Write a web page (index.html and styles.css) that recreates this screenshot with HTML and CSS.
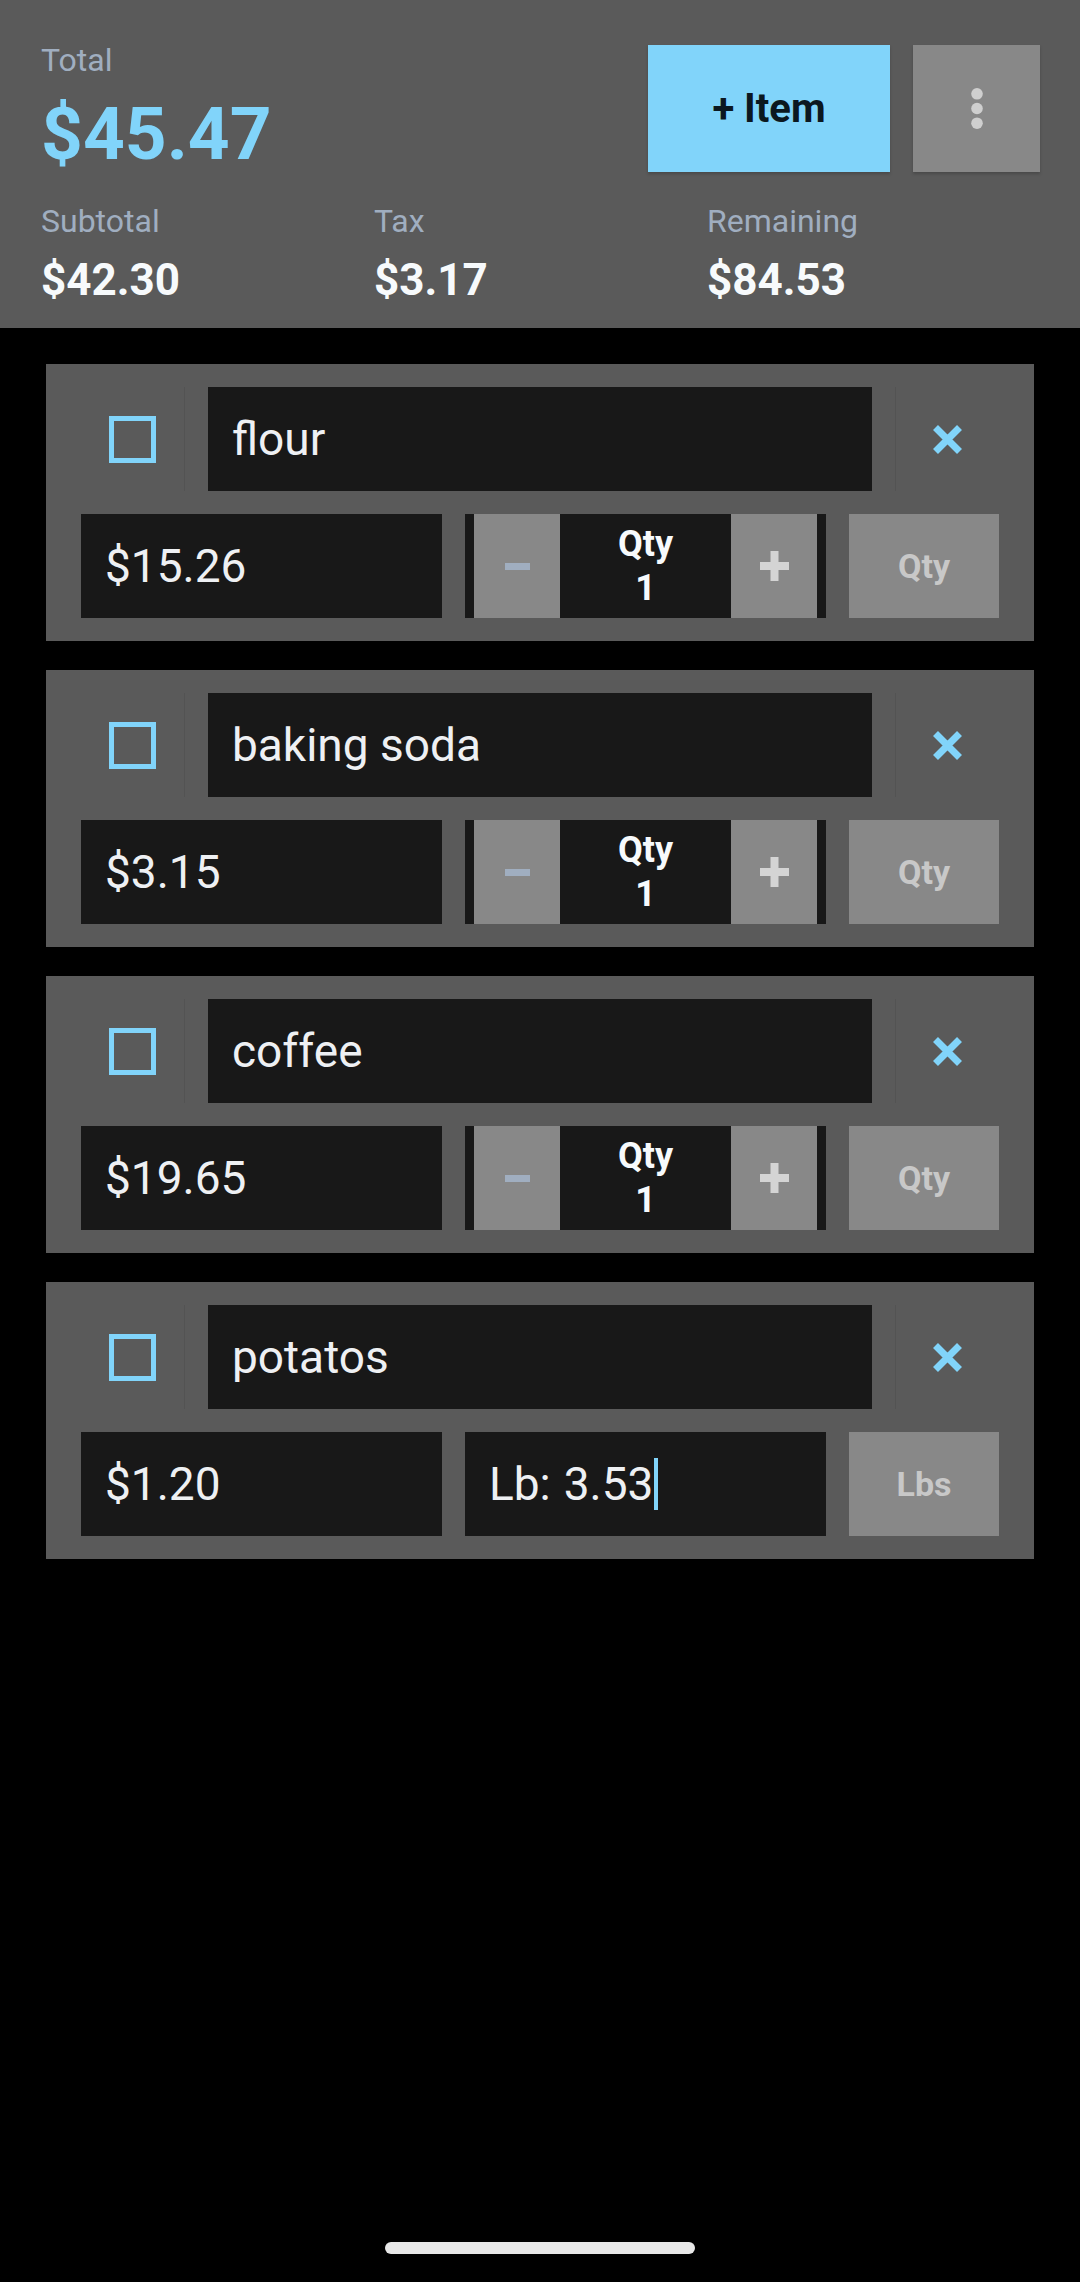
FILE: index.html
```html
<!DOCTYPE html>
<html>
  <head>
    <title>Grocery Total</title>
    <meta charset="UTF-8" />
    <link rel="stylesheet" href="styles.css">
  </head>
  <body>
    <div class="header">
      <div class="top">
        <div class="total">
          <div class="label">Total</div>
          <div class="amount">$45.47</div>
        </div>
        <div class="actions">
          <div class="add-btn">+ Item</div>
          <div class="menu-btn">
            <svg width="12" height="41" viewBox="0 0 12 41"><circle cx="6" cy="5.8" r="5.8" fill="#cfcfcf"/><circle cx="6" cy="20.5" r="5.8" fill="#cfcfcf"/><circle cx="6" cy="35.2" r="5.8" fill="#cfcfcf"/></svg>
          </div>
        </div>
      </div>
      <div class="summary">
        <div><div class="label">Subtotal</div><div class="amount">$42.30</div></div>
        <div><div class="label">Tax</div><div class="amount">$3.17</div></div>
        <div><div class="label">Remaining</div><div class="amount">$84.53</div></div>
      </div>
    </div>

    <div class="list">
      <div class="card">
        <div class="row-top">
          <div class="check-cell"><div class="checkbox"></div></div>
          <div class="field">flour</div>
          <div class="remove-cell"><svg width="29" height="29" viewBox="0 0 29 29"><path d="M2.5 2.5L26.5 26.5M26.5 2.5L2.5 26.5" stroke="#81d4fa" stroke-width="7"/></svg></div>
        </div>
        <div class="row-bottom">
          <div class="field">$15.26</div>
          <div class="stepper">
            <div class="step"><div class="minus"></div></div>
            <div class="qty">Qty<br />1</div>
            <div class="step"><svg width="29" height="30" viewBox="0 0 29 30"><path d="M14.5 0V30M0 15H29" stroke="#d4d4d4" stroke-width="8"/></svg></div>
          </div>
          <div class="unit-btn">Qty</div>
        </div>
      </div>

      <div class="card">
        <div class="row-top">
          <div class="check-cell"><div class="checkbox"></div></div>
          <div class="field">baking soda</div>
          <div class="remove-cell"><svg width="29" height="29" viewBox="0 0 29 29"><path d="M2.5 2.5L26.5 26.5M26.5 2.5L2.5 26.5" stroke="#81d4fa" stroke-width="7"/></svg></div>
        </div>
        <div class="row-bottom">
          <div class="field">$3.15</div>
          <div class="stepper">
            <div class="step"><div class="minus"></div></div>
            <div class="qty">Qty<br />1</div>
            <div class="step"><svg width="29" height="30" viewBox="0 0 29 30"><path d="M14.5 0V30M0 15H29" stroke="#d4d4d4" stroke-width="8"/></svg></div>
          </div>
          <div class="unit-btn">Qty</div>
        </div>
      </div>

      <div class="card">
        <div class="row-top">
          <div class="check-cell"><div class="checkbox"></div></div>
          <div class="field">coffee</div>
          <div class="remove-cell"><svg width="29" height="29" viewBox="0 0 29 29"><path d="M2.5 2.5L26.5 26.5M26.5 2.5L2.5 26.5" stroke="#81d4fa" stroke-width="7"/></svg></div>
        </div>
        <div class="row-bottom">
          <div class="field">$19.65</div>
          <div class="stepper">
            <div class="step"><div class="minus"></div></div>
            <div class="qty">Qty<br />1</div>
            <div class="step"><svg width="29" height="30" viewBox="0 0 29 30"><path d="M14.5 0V30M0 15H29" stroke="#d4d4d4" stroke-width="8"/></svg></div>
          </div>
          <div class="unit-btn">Qty</div>
        </div>
      </div>

      <div class="card">
        <div class="row-top">
          <div class="check-cell"><div class="checkbox"></div></div>
          <div class="field">potatos</div>
          <div class="remove-cell"><svg width="29" height="29" viewBox="0 0 29 29"><path d="M2.5 2.5L26.5 26.5M26.5 2.5L2.5 26.5" stroke="#81d4fa" stroke-width="7"/></svg></div>
        </div>
        <div class="row-bottom">
          <div class="field">$1.20</div>
          <div class="field"><span class="unit-label">Lb:</span><span>3.53</span><span class="cursor"></span></div>
          <div class="unit-btn">Lbs</div>
        </div>
      </div>
    </div>

    <div class="home-bar"></div>
  </body>
</html>
```

FILE: styles.css
```css
body {
  margin: 0;
  min-height: 2282px;
  background: #000;
  font-family: Roboto, "Liberation Sans", sans-serif;
  display: flex;
  flex-direction: column;
}
.header {
  background: #5a5a5a;
  padding: 41px 40px 22px 41px;
}
.top {
  display: flex;
  align-items: flex-start;
}
.total {
  flex: 1;
}
.label {
  font-size: 32px;
  line-height: 38px;
  color: #a0aec0;
}
.total .amount {
  margin-top: 12px;
  font-size: 73px;
  line-height: 86px;
  font-weight: bold;
  color: #81d4fa;
}
.actions {
  display: flex;
  gap: 23px;
  margin-top: 4px;
}
.add-btn,
.menu-btn {
  height: 127px;
  display: flex;
  align-items: center;
  justify-content: center;
  box-shadow: 0 2px 3px rgba(0, 0, 0, 0.2);
}
.add-btn {
  width: 242px;
  background: #81d4fa;
  color: #0b1820;
  font-size: 40px;
  font-weight: bold;
}
.menu-btn {
  width: 127px;
  background: #888;
}
.summary {
  display: grid;
  grid-template-columns: repeat(3, 333px);
  margin-top: 25px;
}
.summary .amount {
  margin-top: 14px;
  font-size: 44px;
  line-height: 52px;
  font-weight: bold;
  color: #f7fafc;
}
.list {
  display: flex;
  flex-direction: column;
  gap: 29px;
  padding: 36px 46px;
}
.card {
  background: #5a5a5a;
  padding: 23px 35px;
  display: flex;
  flex-direction: column;
  gap: 23px;
}
.row-top,
.row-bottom {
  display: grid;
  gap: 23px;
  height: 104px;
}
.row-top {
  grid-template-columns: 104px 1fr 104px;
}
.row-bottom {
  grid-template-columns: 361px 361px 150px;
}
.check-cell,
.remove-cell {
  display: flex;
  align-items: center;
  justify-content: center;
  box-sizing: border-box;
}
.check-cell {
  border-right: 1px solid #535353;
}
.remove-cell {
  border-left: 1px solid #535353;
}
.checkbox {
  width: 47px;
  height: 47px;
  box-sizing: border-box;
  border: 5.5px solid #81d4fa;
}
.field {
  background: #181818;
  color: #eef0f3;
  font-size: 46px;
  padding: 0 24px;
  display: flex;
  align-items: center;
}
.unit-label {
  margin-right: 13px;
}
.cursor {
  display: inline-block;
  width: 4px;
  height: 52px;
  margin-left: 1px;
  background: #81d4fa;
}
.stepper {
  background: #181818;
  padding: 0 9px;
  display: grid;
  grid-template-columns: 86px 1fr 86px;
}
.step {
  background: #888;
  display: flex;
  align-items: center;
  justify-content: center;
}
.minus {
  width: 25px;
  height: 7px;
  background: #a0aec0;
}
.qty {
  display: flex;
  flex-direction: column;
  justify-content: center;
  text-align: center;
  font-size: 36px;
  line-height: 44px;
  font-weight: bold;
  color: #f7fafc;
}
.unit-btn {
  background: #888;
  color: #c8c8c8;
  font-size: 34px;
  font-weight: bold;
  display: flex;
  align-items: center;
  justify-content: center;
}
.home-bar {
  width: 310px;
  height: 12px;
  margin: auto auto 28px;
  border-radius: 6px;
  background: #e8e8e8;
}
```
